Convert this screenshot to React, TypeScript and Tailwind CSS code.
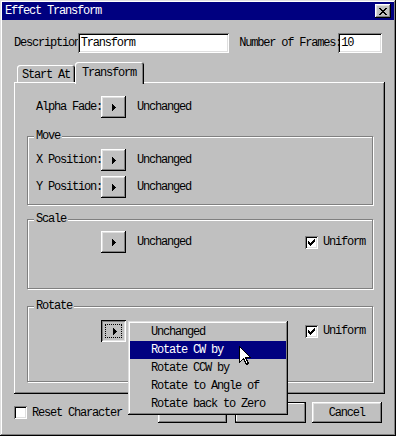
import React from "react";

const raised =
  "shadow-[inset_-1px_-1px_#000,inset_1px_1px_#fff,inset_-2px_-2px_#808080,inset_2px_2px_#dfdfdf]";
const sunken =
  "shadow-[inset_1px_1px_#808080,inset_-1px_-1px_#fff,inset_2px_2px_#000,inset_-2px_-2px_#dfdfdf]";
const etched = "border border-[#808080] shadow-[inset_1px_1px_#fff,1px_1px_#fff]";

const Arrow = () => (
  <svg width="4" height="7" viewBox="0 0 4 7" shapeRendering="crispEdges">
    <path d="M0 0h1v7H0zM1 1h1v5H1zM2 2h1v3H2zM3 3h1v1H3z" fill="#000" />
  </svg>
);

const PickBtn = ({ pressed = false }: { pressed?: boolean }) =>
  pressed ? (
    <div className="relative flex h-[22px] w-[25px] shrink-0 items-center justify-center shadow-[inset_1px_1px_#000,inset_-1px_-1px_#fff,inset_2px_2px_#808080,inset_-2px_-2px_#dfdfdf]">
      <div className="absolute inset-[4px] border border-dotted border-black" />
      <div className="ml-[2px] mt-[1px] flex">
        <Arrow />
      </div>
    </div>
  ) : (
    <div className={`flex h-[22px] w-[25px] shrink-0 items-center justify-center ${raised}`}>
      <Arrow />
    </div>
  );

const CheckBox = ({ checked }: { checked?: boolean }) => (
  <div className={`flex h-[13px] w-[13px] shrink-0 items-center justify-center bg-white ${sunken}`}>
    {checked && (
      <svg width="7" height="7" viewBox="0 0 7 7" shapeRendering="crispEdges">
        <path
          d="M6 0h1v1H6zM5 1h2v1H5zM0 2h1v1H0zM4 2h3v1H4zM0 3h2v1H0zM3 3h3v1H3zM0 4h5v1H0zM1 5h3v1H1zM2 6h1v1H2z"
          fill="#000"
        />
      </svg>
    )}
  </div>
);

const Group = ({
  label,
  className,
  children,
}: {
  label: string;
  className: string;
  children: React.ReactNode;
}) => (
  <div className={`relative ${etched} ${className}`}>
    <span className="absolute -top-[7px] left-[6px] bg-[#c0c0c0] px-[2px] leading-[12px]">{label}</span>
    {children}
  </div>
);

const Row = ({ label, pressed }: { label: string; pressed?: boolean }) => (
  <div className="flex items-center">
    <span className="w-[65px] whitespace-nowrap">{label}</span>
    <PickBtn pressed={pressed} />
    <span className="ml-[11px]">Unchanged</span>
  </div>
);

const menuItems = ["Unchanged", "Rotate CW by", "Rotate CCW by", "Rotate to Angle of", "Rotate back to Zero"];

export default function App() {
  return (
    <div
      className={`relative flex h-[436px] w-[396px] flex-col bg-[#c0c0c0] p-[2px] font-['Liberation_Mono',monospace] text-[12px] leading-none tracking-[-1.2px] text-black shadow-[inset_-1px_-1px_#000,inset_1px_1px_#dfdfdf,inset_-2px_-2px_#808080,inset_2px_2px_#fff]`}
    >
      {/* title bar */}
      <div className="flex h-[18px] items-center justify-between bg-[#000080] pl-[3px] pr-[3px] text-white">
        <span>Effect Transform</span>
        <div className={`flex h-[14px] w-[16px] items-center justify-center bg-[#c0c0c0] ${raised}`}>
          <svg width="8" height="7" viewBox="0 0 8 7" shapeRendering="crispEdges">
            <path
              d="M0 0h2v1H0zM6 0h2v1H6zM1 1h2v1H1zM5 1h2v1H5zM2 2h4v1H2zM3 3h2v1H3zM2 4h4v1H2zM1 5h2v1H1zM5 5h2v1H5zM0 6h2v1H0zM6 6h2v1H6z"
              fill="#000"
            />
          </svg>
        </div>
      </div>

      <div className="flex flex-col px-[12px]">
        {/* description row */}
        <div className="mt-[13px] flex h-[20px] items-center">
          <span className="w-[64px] overflow-hidden whitespace-nowrap">Description</span>
          <div className={`flex h-[20px] w-[152px] items-center bg-white pl-[3px] ${sunken}`}>Transform</div>
          <span className="relative z-10 ml-[10px] w-[99px] whitespace-nowrap">Number of Frames:</span>
          <div className={`flex h-[20px] w-[44px] items-center bg-white pl-[3px] ${sunken}`}>10</div>
        </div>

        {/* tabs */}
        <div className="mt-[9px] flex h-[20px] items-end pl-[3px]">
          <div className="flex h-[17px] w-[58px] items-center rounded-t-[3px] pl-[5px] pt-[2px] shadow-[inset_1px_1px_#fff,inset_-1px_0_#000,inset_-2px_0_#808080]">
            Start At
          </div>
          <div className="relative z-10 -mb-[2px] flex h-[22px] w-[69px] items-start rounded-t-[3px] bg-[#c0c0c0] pl-[7px] pt-[5px] shadow-[inset_1px_1px_#fff,inset_-1px_0_#000,inset_-2px_0_#808080]">
            Transform
          </div>
        </div>

        {/* tab panel */}
        <div
          className={`flex h-[312px] w-[371px] flex-col pb-[2px] pl-[13px] pr-[12px] pt-[14px] shadow-[inset_-1px_-1px_#000,inset_1px_1px_#fff,inset_-2px_-2px_#808080]`}
        >
          <div className="pl-[9px]">
            <Row label="Alpha Fade:" />
          </div>

          <Group label="Move" className="mt-[18px] flex h-[69px] flex-col gap-[5px] pl-[8px] pt-[12px]">
            <Row label="X Position:" />
            <Row label="Y Position:" />
          </Group>

          <Group label="Scale" className="mt-[14px] h-[70px] pl-[73px] pt-[11px]">
            <div className="flex items-center">
              <PickBtn />
              <span className="ml-[11px] w-[168px]">Unchanged</span>
              <CheckBox checked />
              <span className="ml-[5px]">Uniform</span>
            </div>
          </Group>

          <Group label="Rotate" className="mt-[17px] h-[76px] pl-[73px] pt-[13px]">
            <div className="flex items-center">
              <PickBtn pressed />
              <span className="ml-[11px] w-[168px]" />
              <CheckBox checked />
              <span className="ml-[5px]">Uniform</span>
            </div>
          </Group>
        </div>

        {/* bottom row */}
        <div className="mt-[8px] flex h-[21px] items-center">
          <div className="flex w-[145px] items-center">
            <CheckBox />
            <span className="ml-[5px]">Reset Character</span>
          </div>
          <div className={`h-[21px] w-[70px] ${raised}`} />
          <div className="ml-[8px] flex h-[21px] w-[71px] border border-black">
            <div className="flex-1 shadow-[inset_-1px_-1px_#808080,inset_1px_1px_#fff]" />
          </div>
          <div className={`ml-[6px] flex h-[21px] w-[71px] items-center justify-center ${raised}`}>Cancel</div>
        </div>
      </div>

      {/* popup menu */}
      <div className="absolute left-[128px] top-[321px] z-20 flex w-[160px] flex-col bg-[#c0c0c0] p-[2px] shadow-[inset_-1px_-1px_#000,inset_1px_1px_#dfdfdf,inset_-2px_-2px_#808080,inset_2px_2px_#fff]">
        {menuItems.map((m, i) => (
          <div
            key={m}
            className={`flex h-[18px] items-center pl-[21px] ${i === 1 ? "bg-[#000080] text-white" : ""}`}
          >
            {m}
          </div>
        ))}
      </div>

      {/* mouse cursor */}
      <svg className="absolute left-[239px] top-[346px] z-30" width="13" height="20" viewBox="0 0 13 20">
        <path
          d="M0.5 0.5 L0.5 16.5 L4.5 12.5 L7.5 18.5 L9.5 17.5 L6.5 11.5 L11.5 11.5 Z"
          fill="#fff"
          stroke="#000"
          strokeWidth="1"
          shapeRendering="crispEdges"
        />
      </svg>
    </div>
  );
}
